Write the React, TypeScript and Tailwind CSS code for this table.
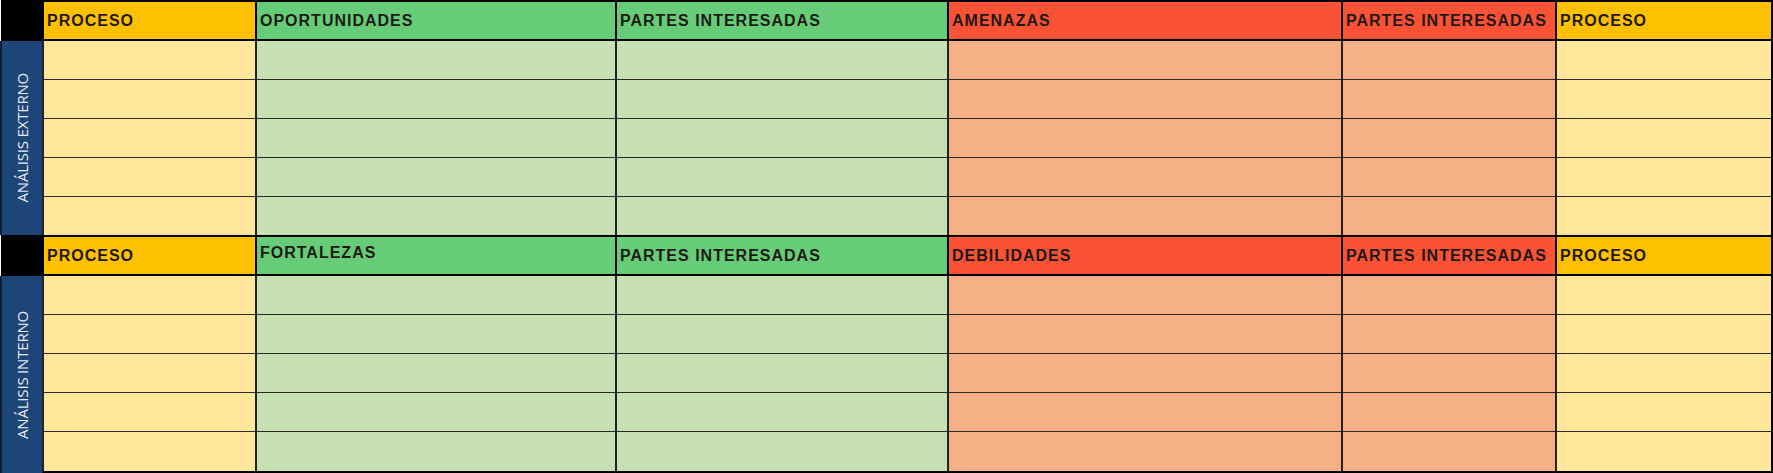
type Col = { head: string; body: string; last?: boolean };

const cols: Col[] = [
  { head: 'bg-[#ffc000]', body: 'bg-[#ffe699]' },
  { head: 'bg-[#66cc78]', body: 'bg-[#c6e0b4]' },
  { head: 'bg-[#66cc78]', body: 'bg-[#c6e0b4]' },
  { head: 'bg-[#fb5134]', body: 'bg-[#f4b084]' },
  { head: 'bg-[#fb5134]', body: 'bg-[#f4b084]' },
  { head: 'bg-[#ffc000]', body: 'bg-[#ffe699]', last: true },
];

const blocks = [
  {
    side: 'ANÁLISIS EXTERNO',
    heads: ['PROCESO', 'OPORTUNIDADES', 'PARTES INTERESADAS', 'AMENAZAS', 'PARTES INTERESADAS', 'PROCESO'],
    bottom: false,
  },
  {
    side: 'ANÁLISIS INTERNO',
    heads: ['PROCESO', 'FORTALEZAS', 'PARTES INTERESADAS', 'DEBILIDADES', 'PARTES INTERESADAS', 'PROCESO'],
    bottom: true,
  },
];

function Block({ side, heads, bottom }: { side: string; heads: string[]; bottom: boolean }) {
  const rows = [0, 1, 2, 3, 4];
  return (
    <>
      {/* header row */}
      <div className="bg-black border-l border-white" />
      {heads.map((h, i) => (
        <div
          key={'h' + i}
          className={`${cols[i].head} border-y-2 border-l-2 border-black flex items-center pl-[3px] ${cols[i].last ? 'border-r-2' : ''} ${h === 'FORTALEZAS' ? 'pb-[5px]' : ''}`}
        >
          <span className="font-['Liberation_Sans',Arial,sans-serif] font-bold text-[16px] tracking-[1px] text-[#1d1a16] leading-none">
            {h}
          </span>
        </div>
      ))}

      {/* side label */}
      <div className="row-span-5 bg-[#1d4577] border-l-2 border-[#0d1f36] flex items-center justify-center">
        <span className="[writing-mode:vertical-rl] rotate-180 font-['Open_Sans',sans-serif] text-[15px] text-[#e4ebf5] tracking-[-0.2px] whitespace-nowrap">
          {side}
        </span>
      </div>

      {rows.map((r) =>
        cols.map((c, i) => (
          <div
            key={`${r}-${i}`}
            className={`${c.body} border-l-2 border-[#222] ${r < 4 ? 'border-b border-b-[#2a2a2a]' : ''} ${
              r === 4 && bottom ? 'border-b-2 border-b-black' : ''
            } ${c.last ? 'border-r-2 border-r-black' : ''}`}
          />
        ))
      )}
    </>
  );
}

export default function App() {
  return (
    <div className="w-[1773px] h-[473px] bg-white overflow-hidden">
      <div className="grid grid-cols-[42px_213px_360px_332px_394px_214px_218px] grid-rows-[41px_39px_39px_39px_39px_38px_41px_39px_39px_39px_39px_41px]">
        {blocks.map((b) => (
          <Block key={b.side} side={b.side} heads={b.heads} bottom={b.bottom} />
        ))}
      </div>
    </div>
  );
}
